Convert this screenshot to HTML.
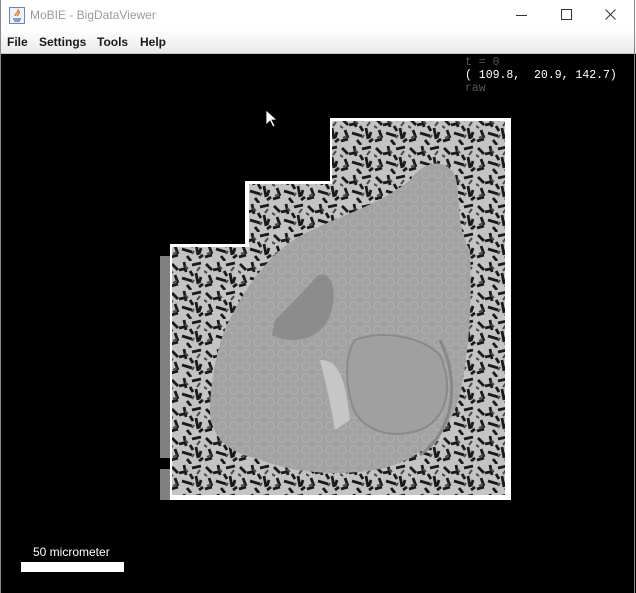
<!DOCTYPE html>
<html><head><meta charset="utf-8"><style>
html,body{margin:0;padding:0;width:636px;height:593px;overflow:hidden;background:#000;font-family:"Liberation Sans",sans-serif}
.title{position:absolute;left:0;top:0;width:636px;height:31px;background:#fff}
.title .t{position:absolute;left:30px;top:8px;font-size:12px;color:#9a9a9a}
.menu{position:absolute;left:0;top:31px;width:636px;height:22px;background:linear-gradient(#fdfdfd,#eaeaea);border-bottom:1px solid #c8c8c8}
.menu span{position:absolute;top:4px;font-size:12px;font-weight:bold;color:#1a1a1a}
.view{position:absolute;left:1px;top:54px;width:633px;height:539px;background:#000}
.mono{position:absolute;font-family:"Liberation Mono",monospace;font-size:11.5px;white-space:pre;line-height:13px}
.edge{position:absolute;top:0;width:1px;height:593px;background:#888}
</style></head><body>
<div class="title">
<svg style="position:absolute;left:9px;top:7px" width="16" height="17" viewBox="0 0 16 17"><rect x="0.5" y="0.5" width="15" height="16" fill="#eef3fa" stroke="#6b88b0"/><path d="M4 12h8M5 14h6" stroke="#4a6fa0" stroke-width="1.2"/><path d="M6 9c0-3 4-3 3-7M8 9c1-2 3-2 2-5" stroke="#e07020" stroke-width="1.3" fill="none"/></svg>
<div class="t">MoBIE - BigDataViewer</div>
<div style="position:absolute;left:516px;top:15px;width:11px;height:1px;background:#333"></div>
<div style="position:absolute;left:561px;top:9px;width:9px;height:9px;border:1px solid #333"></div>
<svg style="position:absolute;left:605px;top:9px" width="11" height="11"><path d="M0.5 0.5L10.5 10.5M10.5 0.5L0.5 10.5" stroke="#333"/></svg>
</div>
<div class="menu"><span style="left:7px">File</span><span style="left:39px">Settings</span><span style="left:97px">Tools</span><span style="left:140px">Help</span></div>
<div class="view">
<svg width="633" height="539" style="position:absolute;left:0;top:0" viewBox="1 54 633 539">
<defs>
<pattern id="spk" width="34" height="29" patternUnits="userSpaceOnUse">
<rect width="34" height="29" fill="#c4c4c4"/>
<path d="M2 3l6 6M14 1l2 10M22 4l9-2M5 14l3 8M12 17l10 3M26 12l2 11M1 25l7-2M17 24l4 5M29 26l4-3M9 9l5-1M20 10l3 5M31 16l-2 6" stroke="#1a1a1a" stroke-width="2.8"/>
<path d="M30 6l-3 4M7 20l-4 2M24 19l-2 3M15 5l3 3M0 10l3 2" stroke="#4a4a4a" stroke-width="2"/>
</pattern>
<pattern id="tis" width="12" height="12" patternUnits="userSpaceOnUse">
<rect width="12" height="12" fill="#a2a2a2"/><circle cx="6" cy="6" r="4.3" fill="none" stroke="#b0b0b0" stroke-width="1"/>
</pattern>
</defs>
<path d="M330 118H511V500H170V244H245V181H330Z" fill="#fff"/>
<path d="M332 121H505V495H172V247H249V184H332Z" fill="url(#spk)"/>
<rect x="160" y="256" width="10" height="202" fill="#808080"/>
<rect x="160" y="469" width="10" height="31" fill="#808080"/>
<path d="M300 236C340 215 380 205 410 180C425 160 445 158 455 175C462 200 455 225 470 250C472 300 470 340 462 385C455 425 430 455 385 468C335 478 290 472 255 458C225 452 208 432 210 405C212 370 220 335 232 315C250 280 272 252 300 236Z" fill="url(#tis)"/>
<path d="M275 320C290 305 305 290 318 275C335 270 338 300 328 320C318 340 292 345 272 335Z" fill="#8c8c8c"/>
<path d="M355 340C380 330 420 335 440 355C455 390 445 420 420 430C390 440 360 430 352 405C345 380 345 355 355 340Z" fill="#a0a0a0" stroke="#8a8a8a" stroke-width="2"/>
<path d="M320 360C340 360 345 380 350 420L335 430C330 400 325 380 320 360Z" fill="#c6c6c6"/>
<path d="M440 340C460 380 455 430 420 455" stroke="#888" stroke-width="3" fill="none"/>
<path d="M266 110v15l4-4 3 6 2-1-3-6h5z" fill="#fff" stroke="#000" stroke-width="0.8"/>
</svg>
<div class="mono" style="left:464px;top:2px;color:#555">t = 0</div>
<div class="mono" style="left:464px;top:15px;color:#fff">( 109.8,  20.9, 142.7)</div>
<div class="mono" style="left:464px;top:28px;color:#555">raw</div>
<div style="position:absolute;left:32px;top:491px;font-size:12px;color:#fff">50 micrometer</div>
<div style="position:absolute;left:20px;top:508px;width:103px;height:10px;background:#fff"></div>
</div>
<div class="edge" style="left:0"></div><div class="edge" style="left:634px"></div>
</body></html>
